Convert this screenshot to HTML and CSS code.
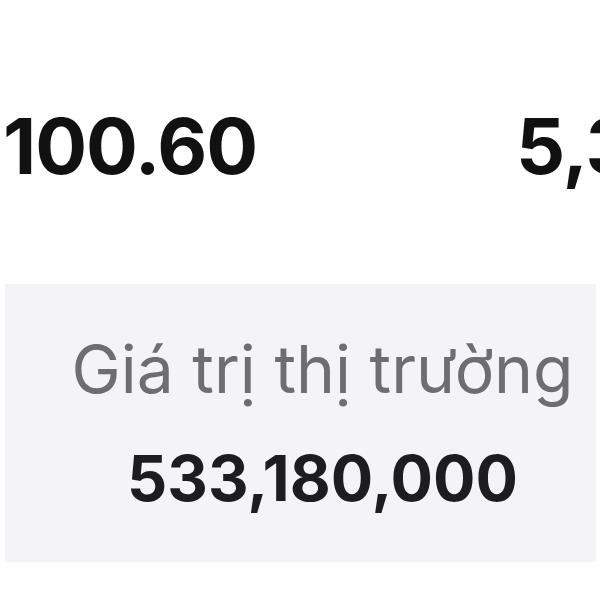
FILE: index.html
```html
<!DOCTYPE html>
<html lang="vi">
<head>
  <meta charset="UTF-8">
  <meta name="viewport" content="width=device-width, initial-scale=1.0">
  <title>Giá trị thị trường</title>
  <link rel="stylesheet" href="styles.css">
</head>
<body>

<div class="stats-row">
  <div class="stat left">100.60</div>
  <div class="stat right">5,330,000</div>
</div>

<div class="market-card">
  <div class="market-label">Giá trị thị trường</div>
  <div class="market-value">533,180,000</div>
</div>

</body>
</html>
```

FILE: styles.css
```css
* {
  box-sizing: border-box;
}

body {
  margin: 0;
  padding: 0;
  font-family: Inter, 'Noto Sans', sans-serif;
  background-color: #fff;
  overflow: hidden;
  width: 600px;
  height: 600px;
}

.stats-row {
  display: flex;
  height: 284px;
  padding-top: 108px;
  white-space: nowrap;
  overflow: hidden;
}

.stat {
  font-size: 77px;
  font-weight: 700;
  line-height: 1;
  color: #111;
  letter-spacing: -1px;
}

.stat.left {
  padding-left: 3px;
  width: 516px;
  flex-shrink: 0;
}

.market-card {
  margin: 0 4px 0 5px;
  height: 278px;
  background-color: #f4f4f7;
  display: flex;
  flex-direction: column;
  align-items: center;
  padding-left: 44px;
  padding-top: 52px;
}

.market-label {
  font-size: 66px;
  line-height: 1;
  color: #6d6d72;
}

.market-value {
  margin-top: 45px;
  font-size: 63px;
  font-weight: 700;
  line-height: 1;
  color: #1d1d1f;
}
```
